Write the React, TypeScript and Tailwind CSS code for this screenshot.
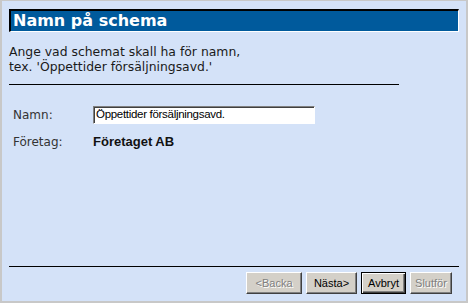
const btn =
  "h-[22px] bg-[#d4d0c8] border border-t-white border-l-white border-r-[#404040] border-b-[#404040] shadow-[inset_-1px_-1px_0_#808080] text-[11px] font-['Liberation_Sans',Arial,sans-serif] leading-none flex items-center justify-center";

export default function App() {
  return (
    <div className="w-[468px] h-[303px] bg-[#d4e2f8] border-t border-x-2 border-b-2 border-[#c8c8c8] flex flex-col px-[7px] pt-[8px] font-['DejaVu_Sans',Verdana,sans-serif]">
      <div className="h-[23px] w-[450px] bg-[#005a9c] border-t-2 border-l-2 border-black border-r border-b border-r-white border-b-white flex items-center pl-[2px]">
        <span className="text-white font-bold text-[16px] leading-none">Namn på schema</span>
      </div>

      <p className="mt-[12px] text-[12.4px] leading-[15px] text-[#1a1a1a]">
        Ange vad schemat skall ha för namn,
        <br />
        tex. 'Öppettider försäljningsavd.'
      </p>
      <div className="mt-[10px] w-[390px] h-px bg-black" />

      <div className="mt-[21px] flex items-center">
        <span className="w-[84px] pl-[4px] text-[12px] text-[#333]">Namn:</span>
        <div className="w-[222px] h-[18px] bg-white border-t border-l border-[#808080] border-r border-b border-r-white border-b-white shadow-[inset_1px_1px_0_#404040] flex items-center pl-[2px]">
          <span className="text-[11.5px] tracking-[-0.3px] leading-none text-black font-['Liberation_Sans',Arial,sans-serif]">
            Öppettider försäljningsavd.
          </span>
        </div>
      </div>
      <div className="mt-[8px] flex items-center">
        <span className="w-[84px] pl-[4px] text-[12px] text-[#333]">Företag:</span>
        <span className="text-[13px] font-bold text-[#111] font-['Liberation_Sans',Arial,sans-serif]">Företaget AB</span>
      </div>

      <div className="flex-1" />
      <div className="w-[450px] h-px bg-black" />
      <div className="mt-[5px] mb-[7px] flex justify-end gap-[4px] pr-[7px]">
        <button className={`${btn} w-[56px] text-[#808080] [text-shadow:1px_1px_0_#fff]`}>&lt;Backa</button>
        <button className={`${btn} w-[51px] text-black`}>Nästa&gt;</button>
        <button className="h-[22px] w-[45px] bg-[#d4d0c8] border border-black shadow-[inset_1px_1px_0_#fff,inset_-1px_-1px_0_#404040,inset_-2px_-2px_0_#808080] text-[11px] font-['Liberation_Sans',Arial,sans-serif] leading-none text-black flex items-center justify-center">
          Avbryt
        </button>
        <button className={`${btn} w-[42px] text-[#808080] [text-shadow:1px_1px_0_#fff]`}>Slutför</button>
      </div>
    </div>
  );
}
